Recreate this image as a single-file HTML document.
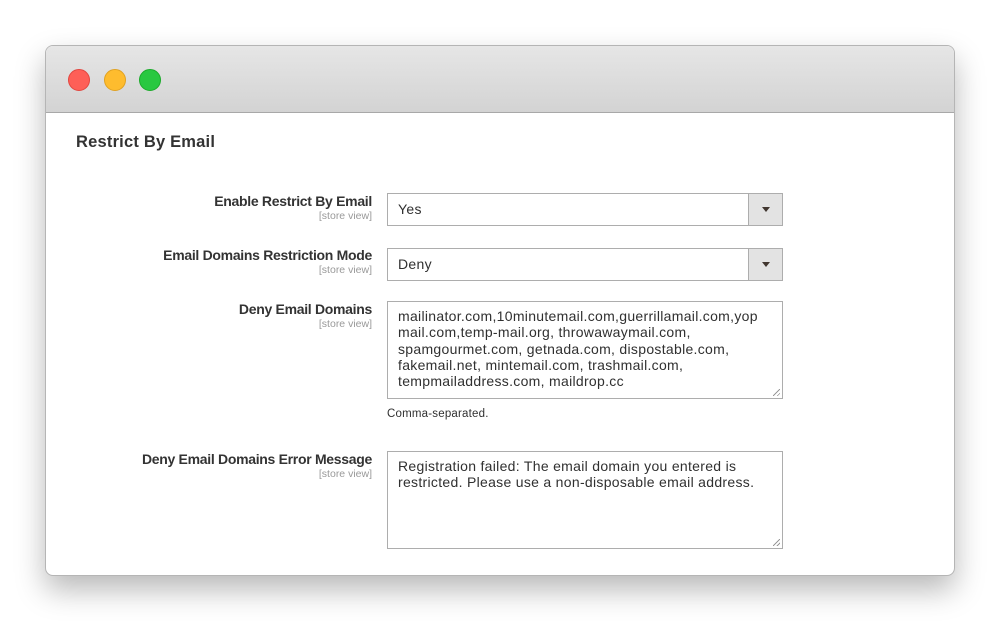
<!DOCTYPE html>
<html><head><meta charset="utf-8"><style>
*{margin:0;padding:0;box-sizing:border-box}
body{width:1000px;height:621px;background:#fff;font-family:"Liberation Sans",sans-serif;position:relative;overflow:hidden}
.win{position:absolute;left:45px;top:45px;width:910px;height:531px;border:1px solid #b5b5b5;border-radius:8px;background:#fff;box-shadow:0 14px 30px rgba(0,0,0,.28);overflow:hidden}
.tb{position:absolute;left:0;top:0;width:100%;height:67px;background:linear-gradient(#e6e6e6,#d3d3d3);border-bottom:1px solid #a8a8a8}
.dot{position:absolute;top:23px;width:22px;height:22px;border-radius:50%}
.a{position:absolute}
.lbl{position:absolute;right:582px;text-align:right;font-weight:bold;font-size:14px;color:#333;white-space:nowrap;letter-spacing:-.3px}
.sv{position:absolute;right:582px;font-size:10.5px;color:#999;white-space:nowrap}
.sel{position:absolute;left:341px;width:396px;height:33px;border:1px solid #adadad;font-size:14px;color:#303030;padding:7px 10px;letter-spacing:.3px}
.arr{position:absolute;right:0;top:0;width:34px;height:31px;background:#e3e3e3;border-left:1px solid #adadad}
.arr:after{content:"";position:absolute;left:13px;top:13px;border-left:4.5px solid transparent;border-right:4.5px solid transparent;border-top:5px solid #41362f}
.ta{position:absolute;left:341px;width:396px;height:98px;border:1px solid #adadad;font-size:14px;line-height:16.3px;color:#303030;padding:6px 10px;letter-spacing:.3px}
.ta:after{content:"";position:absolute;right:2px;bottom:2px;width:7px;height:7px;background:linear-gradient(135deg,transparent 45%,#999 45%,#999 55%,transparent 55%,transparent 75%,#999 75%,#999 85%,transparent 85%)}
</style></head><body>
<div class="win">
<div class="tb">
<div class="dot" style="left:22px;background:#fe5f57;border:1px solid #e2463f"></div>
<div class="dot" style="left:58px;background:#febc2e;border:1px solid #e0a120"></div>
<div class="dot" style="left:93px;background:#28c840;border:1px solid #1aab29"></div>
</div>
<div class="a" style="left:30px;top:87px;font-size:16.5px;font-weight:bold;color:#333;letter-spacing:.2px">Restrict By Email</div>

<div class="lbl" style="top:147px">Enable Restrict By Email</div>
<div class="sv" style="top:164px">[store view]</div>
<div class="sel" style="top:147px">Yes<div class="arr"></div></div>

<div class="lbl" style="top:201px">Email Domains Restriction Mode</div>
<div class="sv" style="top:218px">[store view]</div>
<div class="sel" style="top:202px">Deny<div class="arr"></div></div>

<div class="lbl" style="top:255px">Deny Email Domains</div>
<div class="sv" style="top:272px">[store view]</div>
<div class="ta" style="top:255px">mailinator.com,10minutemail.com,guerrillamail.com,yop<br>mail.com,temp-mail.org, throwawaymail.com,<br>spamgourmet.com, getnada.com, dispostable.com,<br>fakemail.net, mintemail.com, trashmail.com,<br>tempmailaddress.com, maildrop.cc</div>
<div class="a" style="left:341px;top:362px;font-size:11.5px;color:#303030;letter-spacing:.2px">Comma-separated.</div>

<div class="lbl" style="top:405px">Deny Email Domains Error Message</div>
<div class="sv" style="top:422px">[store view]</div>
<div class="ta" style="top:405px">Registration failed: The email domain you entered is<br>restricted. Please use a non-disposable email address.</div>
</div>
</body></html>
